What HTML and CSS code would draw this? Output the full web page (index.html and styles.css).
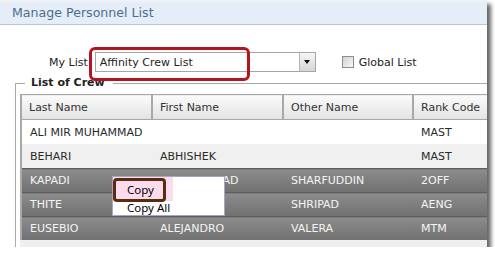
FILE: index.html
```html
<!DOCTYPE html>
<html lang="en">
<head>
    <meta charset="UTF-8">
    <title>Manage Personnel List</title>
    <link rel="stylesheet" href="styles.css">
</head>
<body>
    <div class="window">
        <div class="title-bar">Manage Personnel List</div>

        <div class="list-row">
            <span class="list-label">My List</span>
            <div class="select">
                <span class="select-text">Affinity Crew List</span>
                <span class="select-btn"><i class="arrow"></i></span>
            </div>
            <span class="checkbox"></span>
            <span class="check-label">Global List</span>
        </div>

        <fieldset class="crew">
            <legend>List of Crew</legend>
            <div class="grid">
                <table>
                    <colgroup>
                        <col class="c1"><col class="c2"><col class="c3"><col class="c4">
                    </colgroup>
                    <thead>
                        <tr><th>Last Name</th><th>First Name</th><th>Other Name</th><th>Rank Code</th></tr>
                    </thead>
                    <tbody>
                        <tr><td>ALI MIR MUHAMMAD</td><td></td><td></td><td>MAST</td></tr>
                        <tr class="alt"><td>BEHARI</td><td>ABHISHEK</td><td></td><td>MAST</td></tr>
                        <tr class="sel"><td>KAPADI</td><td class="under-menu">NASIR AHMAD</td><td>SHARFUDDIN</td><td>2OFF</td></tr>
                        <tr class="sel"><td>THITE</td><td></td><td>SHRIPAD</td><td>AENG</td></tr>
                        <tr class="sel"><td>EUSEBIO</td><td>ALEJANDRO</td><td>VALERA</td><td>MTM</td></tr>
                    </tbody>
                </table>
            </div>
        </fieldset>

        <!-- right-click menu over the grid -->
        <div class="context-menu">
            <div class="menu-item active">Copy</div>
            <div class="menu-item">Copy All</div>
        </div>

        <!-- highlight marks drawn on the screenshot -->
        <div class="mark mark-red"></div>
        <div class="mark mark-brown"></div>
    </div>
</body>
</html>
```

FILE: styles.css
```css
body {
    margin: 0;
    background: #fff;
    font-family: "DejaVu Sans", Verdana, sans-serif;
    font-size: 11px;
    color: #222;
}

.window {
    position: relative;
    width: 487px;
    height: 247px;
    overflow: hidden;
    background: #fff;
    box-shadow: 4px 4px 4px rgba(0,0,0,0.6);
}

.title-bar {
    height: 24px;
    line-height: 25px;
    padding-left: 12px;
    font-size: 12.6px;
    color: #4d6d8c;
    background: linear-gradient(#f0f2f4 0, #e5eef8 3px, #e5eef8 100%);
    border-bottom: 1px solid #b9c7d5;
}

.list-row {
    display: flex;
    align-items: center;
    height: 20px;
    margin-top: 27px;
    padding-left: 49px;
}

.list-label {
    margin-right: 7px;
}

.select {
    display: flex;
    align-items: center;
    justify-content: space-between;
    box-sizing: border-box;
    width: 221px;
    height: 20px;
    border: 1px solid #a6a6a6;
    background: #fff;
}

.select-text {
    padding-left: 4px;
}

.select-btn {
    display: flex;
    align-items: center;
    justify-content: center;
    box-sizing: border-box;
    width: 16px;
    height: 18px;
    background: linear-gradient(#f6f6f6, #d6d6d6);
    border-left: 1px solid #b4b4b4;
}

.arrow {
    width: 0;
    height: 0;
    border-left: 3px solid transparent;
    border-right: 3px solid transparent;
    border-top: 4px solid #111;
}

.checkbox {
    box-sizing: border-box;
    width: 12px;
    height: 12px;
    margin-left: 26px;
    border: 1px solid #8e8e8e;
    background: linear-gradient(135deg, #d4d4d4, #f6f6f6);
}

.check-label {
    margin-left: 5px;
}

.crew {
    width: 600px;
    margin: 4px 0 0 15px;
    padding: 4px 0 0 4px;
    border: 1px solid #a9a9a9;
}

.crew legend {
    margin-left: 5px;
    padding: 0 8px 0 6px;
    font-weight: bold;
    font-size: 11px;
    line-height: 14px;
}

.grid {
    background: #efefef;
    height: 200px;
}

table {
    border-collapse: collapse;
    table-layout: fixed;
    width: 542px;
}

col.c1 { width: 131px; }
col.c2 { width: 131px; }
col.c3 { width: 130px; }
col.c4 { width: 150px; }

th {
    height: 24px;
    padding: 0 7px;
    text-align: left;
    font-weight: normal;
    color: #333;
    background: linear-gradient(#fbfbfb, #e3e3e3);
    border: 1px solid #a8a8a8;
    border-left-width: 2px;
}

td {
    height: 24px;
    padding: 0 8px;
    white-space: nowrap;
    background: #fff;
    color: #2a2a2a;
}

td:first-child {
    border-left: 2px solid #a8a8a8;
}

td.under-menu {
    text-align: right;
    padding-right: 45px;
}

tr.alt td {
    background: #f0f0f0;
}

tr.sel td {
    height: 23px;
    color: #f4f4f4;
    background: linear-gradient(#8c8c8c, #707070);
    border-top: 1px solid #5e5e5e;
}

.context-menu {
    position: absolute;
    left: 112px;
    top: 176px;
    box-sizing: border-box;
    width: 113px;
    height: 40px;
    background: #fff;
    border: 1px solid #a6a6c6;
    font-family: "Noto Sans", "Open Sans", sans-serif;
    font-size: 11.5px;
    color: #000;
}

.menu-item {
    height: 14px;
    line-height: 13px;
    padding-left: 14px;
}

.menu-item.active {
    height: 24px;
    line-height: 25px;
    background: linear-gradient(to right, #fbdcee 0, #fbdcee 60px, transparent 60px);
}

.mark {
    position: absolute;
    box-sizing: border-box;
}

.mark-red {
    left: 89px;
    top: 47px;
    width: 161px;
    height: 34px;
    border: 3px solid #b3141e;
    border-radius: 6px;
}

.mark-brown {
    left: 113px;
    top: 178px;
    width: 53px;
    height: 24px;
    border: 3px solid #5b2c0c;
    border-radius: 4px;
}
```
